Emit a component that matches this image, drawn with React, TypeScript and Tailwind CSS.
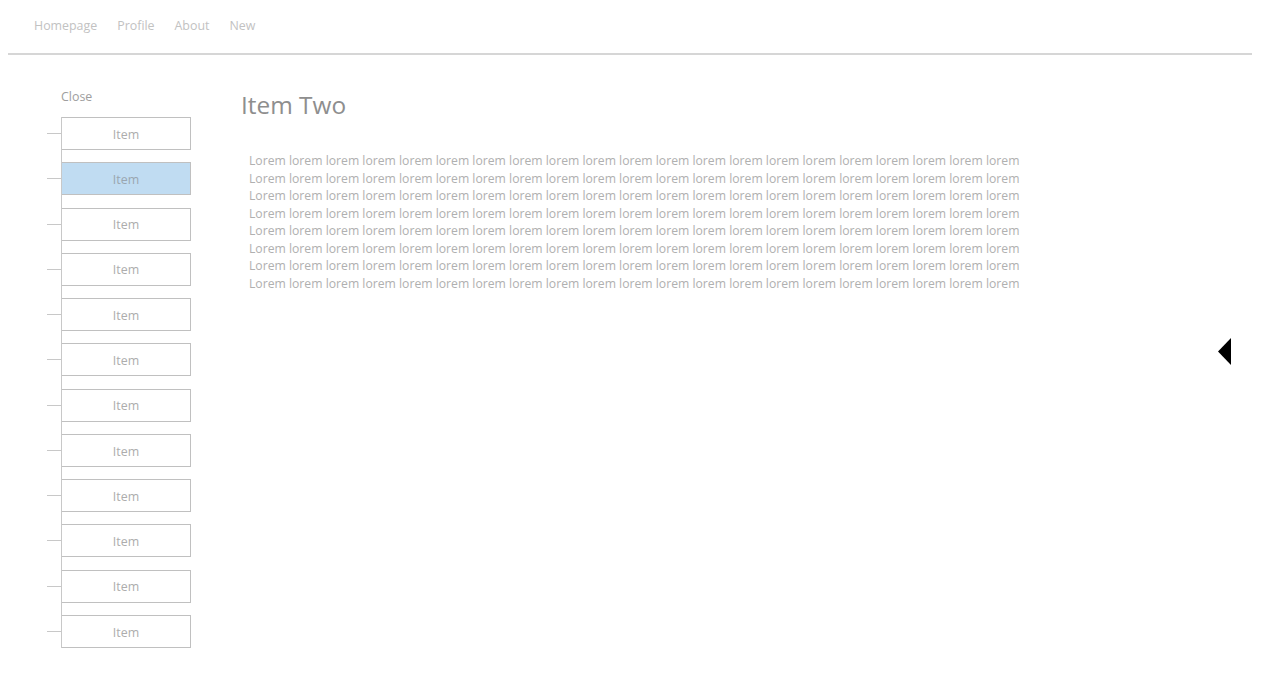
import React from "react";

const items = Array.from({ length: 12 }, (_, i) => i);
const lorem = Array.from({ length: 8 }, () =>
  "Lorem " + Array.from({ length: 20 }, () => "lorem").join(" ")
);

export default function App() {
  return (
    <div
      className="w-[1280px] h-[680px] bg-white relative overflow-hidden"
      style={{ fontFamily: '"Open Sans", "Noto Sans", sans-serif' }}
    >
      <nav className="h-[55px] ml-[8px] mr-[28px] border-b-2 border-[#d6d6d6] flex items-center pl-[26px] gap-[20px] text-[12.4px] text-[#c2c2c2] pb-[1px]">
        <span>Homepage</span>
        <span>Profile</span>
        <span>About</span>
        <span>New</span>
      </nav>
      <div className="flex">
        <aside className="w-[200px] pl-[47px] pt-[33px]">
          <div className="pl-[14px] text-[12.4px] text-[#9e9e9e] leading-[18px] mb-[11px]">Close</div>
          <div className="relative flex flex-col gap-[12.27px]">
            <div className="absolute left-[14px] top-0 bottom-0 w-px bg-[#c8c8c8]" />
            {items.map((i) => (
              <div key={i} className="flex items-center h-[33px]">
                <div className="w-[14px] h-px bg-[#c8c8c8]" />
                <div
                  className={
                    "w-[130px] h-[33px] border border-[#c0c0c0] flex items-center justify-center pt-[3px] text-[12.4px] " +
                    (i === 1 ? "bg-[#c0dcf2] text-[#9aa6b0]" : "bg-white text-[#adadad]")
                  }
                >
                  Item
                </div>
              </div>
            ))}
          </div>
        </aside>
        <main className="flex-1 pl-[41px] pt-[32px]">
          <h1 className="text-[24.4px] text-[#8e8e8e] leading-[36px]">Item Two</h1>
          <div className="mt-[29px] pl-[8px] text-[12.2px] leading-[17.5px] text-[#b0b0b0]">
            {lorem.map((l, i) => (
              <div key={i} className="whitespace-nowrap">{l}</div>
            ))}
          </div>
        </main>
      </div>
      <svg className="absolute left-[1217px] top-[338px]" width="15" height="27" viewBox="0 0 15 27">
        <polygon points="14,0 14,27 1,13.5" fill="#000" />
      </svg>
    </div>
  );
}
